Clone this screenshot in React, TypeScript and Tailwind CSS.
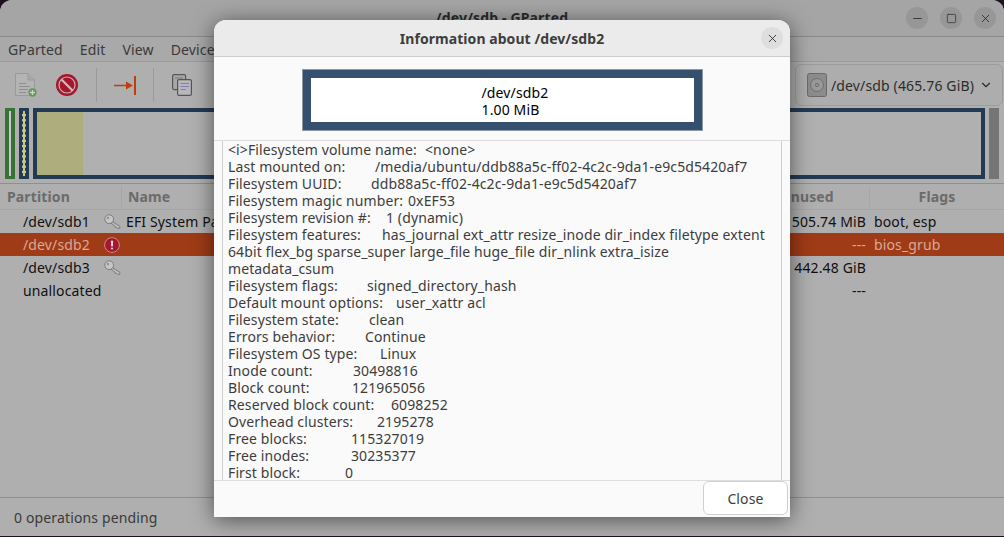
import { ChevronDown, Minus, Square, X } from 'lucide-react';

const partitions = [
  { name: '/dev/sdb1', icon: 'key', label: 'EFI System Partition', unused: '505.74 MiB', flags: 'boot, esp' },
  { name: '/dev/sdb2', icon: 'error', label: '', unused: '---', flags: 'bios_grub', selected: true },
  { name: '/dev/sdb3', icon: 'key', label: '', unused: '442.48 GiB', flags: '' },
  { name: 'unallocated', icon: '', label: '', unused: '---', flags: '' },
];

const info = [
  { label: '<i>Filesystem volume name:', value: '<none>', w: 'w-[197px]' },
  { label: 'Last mounted on:', value: '/media/ubuntu/ddb88a5c-ff02-4c2c-9da1-e9c5d5420af7', w: 'w-[147px]' },
  { label: 'Filesystem UUID:', value: 'ddb88a5c-ff02-4c2c-9da1-e9c5d5420af7', w: 'w-[143px]' },
  { label: 'Filesystem magic number:', value: '0xEF53', w: 'w-[180px]' },
  { label: 'Filesystem revision #:', value: '1 (dynamic)', w: 'w-[158px]' },
  { label: 'Filesystem features:', value: 'has_journal ext_attr resize_inode dir_index filetype extent', w: 'w-[154px]' },
  { label: '64bit flex_bg sparse_super large_file huge_file dir_nlink extra_isize', value: '', w: '' },
  { label: 'metadata_csum', value: '', w: '' },
  { label: 'Filesystem flags:', value: 'signed_directory_hash', w: 'w-[139px]' },
  { label: 'Default mount options:', value: 'user_xattr acl', w: 'w-[168px]' },
  { label: 'Filesystem state:', value: 'clean', w: 'w-[141px]' },
  { label: 'Errors behavior:', value: 'Continue', w: 'w-[137px]' },
  { label: 'Filesystem OS type:', value: 'Linux', w: 'w-[152px]' },
  { label: 'Inode count:', value: '30498816', w: 'w-[125px]' },
  { label: 'Block count:', value: '121965056', w: 'w-[124px]' },
  { label: 'Reserved block count:', value: '6098252', w: 'w-[163px]' },
  { label: 'Overhead clusters:', value: '2195278', w: 'w-[149px]' },
  { label: 'Free blocks:', value: '115327019', w: 'w-[123px]' },
  { label: 'Free inodes:', value: '30235377', w: 'w-[123px]' },
  { label: 'First block:', value: '0', w: 'w-[117px]' },
];

function KeyIcon() {
  return (
    <svg width="17" height="16" viewBox="0 0 17 16" fill="none" stroke="#7c7c7c" strokeWidth="1">
      <path d="M8 7.5 L15.8 12.2 V14.3 H13.4 L12.4 13.2 L11.2 13.4 L10.8 12 L6.8 9" fill="#bdbdbd" />
      <circle cx="5.2" cy="5.2" r="4.4" fill="#c6c6c6" />
      <circle cx="4" cy="4" r="1.2" fill="#909090" stroke="none" />
    </svg>
  );
}

function ErrorIcon() {
  return (
    <svg width="16" height="16" viewBox="0 0 16 16">
      <circle cx="8" cy="8" r="7.4" fill="#a3182e" stroke="#d8a0a0" strokeWidth="0.8" />
      <rect x="7" y="3.5" width="2" height="6" rx="0.8" fill="#e8d8d8" />
      <circle cx="8" cy="11.5" r="1.1" fill="#e8d8d8" />
    </svg>
  );
}

function NewIcon() {
  return (
    <svg width="22" height="24" viewBox="0 0 22 24" fill="none">
      <path d="M0.5 0.5 H13 L19.5 7 V22.5 H0.5 Z" fill="#b4b4b4" stroke="#9a9a9a" />
      <path d="M13 0.5 V7 H19.5" fill="#a8a8a8" stroke="#9a9a9a" />
      <path d="M4 10.5 H11 M4 13.5 H15 M4 16.5 H13 M4 19.5 H11" stroke="#8f8f8f" />
      <circle cx="17.5" cy="19.5" r="4.2" fill="#67955f" />
      <path d="M17.5 17 V22 M15 19.5 H20" stroke="#c8d8c4" strokeWidth="1.3" />
    </svg>
  );
}

function StopIcon() {
  return (
    <svg width="22" height="22" viewBox="0 0 22 22" fill="none">
      <circle cx="11" cy="11" r="11" fill="#a3182e" />
      <circle cx="11" cy="11" r="8" fill="#a3182e" stroke="#c4b4b4" strokeWidth="1.2" />
      <path d="M5.5 5.5 L16.5 16.5" stroke="#c8bcbc" strokeWidth="2.2" />
    </svg>
  );
}

function ApplyIcon() {
  return (
    <svg width="22" height="19" viewBox="0 0 22 19" fill="none">
      <path d="M0 9.5 H14" stroke="#bd3f10" strokeWidth="1.6" />
      <path d="M12 5.5 L19 9.5 L12 13.5 Z" fill="#bd3f10" />
      <rect x="20" y="0" width="2" height="19" fill="#bd3f10" />
    </svg>
  );
}

function CopyIcon() {
  return (
    <svg width="20" height="22" viewBox="0 0 20 22" fill="none">
      <rect x="0.6" y="0.6" width="13" height="15" rx="1.5" fill="#a8a8a8" stroke="#555" strokeWidth="1.2" />
      <path d="M3 4 H11" stroke="#777" />
      <rect x="5.6" y="5.6" width="13.8" height="15.8" rx="1.5" fill="#b8b8bc" stroke="#555" strokeWidth="1.2" />
      <path d="M8.5 9.5 H17 M8.5 12.5 H17 M8.5 15.5 H14" stroke="#7f7fb8" />
    </svg>
  );
}

function DiskIcon() {
  return (
    <svg width="20" height="24" viewBox="0 0 20 24" fill="none">
      <rect x="0.5" y="0.5" width="19" height="23" rx="2" fill="#8c8c8c" stroke="#6a6a6a" />
      <circle cx="10" cy="12" r="6.5" fill="#999" stroke="#6f6f6f" />
      <circle cx="10" cy="12" r="1.6" stroke="#6f6f6f" />
    </svg>
  );
}

function WindowButton({ children }: { children: React.ReactNode }) {
  return (
    <div className="flex h-[22px] w-[22px] items-center justify-center rounded-full bg-[#979797] text-[#2c2c2c]">
      {children}
    </div>
  );
}

function InfoDialog() {
  return (
    <div className="absolute top-[20px] left-[214px] flex h-[497px] w-[576px] flex-col rounded-t-[12px] bg-[#fafafa] shadow-[0_3px_22px_rgba(0,0,0,0.55)]">
      <div className="relative flex h-[37px] shrink-0 items-center justify-center rounded-t-[12px] border-b border-[#cdcdcd] bg-[#ebebeb]">
        <span className="text-[14px] font-bold tracking-[0.06px] text-[#3d3d3d]">Information about /dev/sdb2</span>
        <div className="absolute top-[7px] right-[7px] flex h-[22px] w-[22px] items-center justify-center rounded-full bg-[#dedede] text-[#2c2c2c]">
          <X size={13} strokeWidth={1.6} />
        </div>
      </div>
      <div className="flex flex-1 flex-col min-h-0">
        <div className="flex h-[84px] shrink-0 items-start justify-center border-b border-[#dcdcdc] pt-[12px]">
          <div className="flex h-[62px] w-[401px] flex-col items-start justify-center border border-[#8d9aa6] bg-white pt-[2px] pl-[179px] outline-[8px] -outline-offset-[9px] outline-[#34506e] text-[14px] leading-[17px] text-black">
            <span>/dev/sdb2</span>
            <span>1.00 MiB</span>
          </div>
        </div>
        <div className="mx-[8px] min-h-0 flex-1 overflow-hidden border-x border-[#cfcfcf] pl-[5px] text-[14px] leading-[17px] tracking-[0.11px] text-[#3d3d3d]">
          {info.map((line) => (
            <div key={line.label} className="flex h-[17px] whitespace-pre">
              <span className={line.w}>{line.label}</span>
              <span>{line.value}</span>
            </div>
          ))}
        </div>
      </div>
      <div className="flex h-[37px] shrink-0 items-start justify-end border-t border-[#dedede] pr-[2px]">
        <button className="h-[34px] w-[85px] rounded-[6px] border border-[#cfcfcf] bg-white text-[14px] text-[#3d3d3d]">
          Close
        </button>
      </div>
    </div>
  );
}

export default function App() {
  return (
    <div className="relative h-[537px] w-[1004px] overflow-hidden bg-[#1c1020] font-['Noto_Sans',sans-serif] text-[14px] tracking-[0.14px]">
      <div className="flex h-[536px] flex-col overflow-hidden rounded-t-[12px] bg-[#afafaf]">
        <div className="relative flex h-[37px] shrink-0 items-center justify-center border-b border-[#8a8a8a] bg-[#a5a5a5]">
          <span className="mb-[1px] text-[14px] font-bold text-[#2c2c2c]">/dev/sdb - GParted</span>
          <div className="absolute top-[7px] right-[8px] flex gap-[12px]">
            <WindowButton><Minus size={13} strokeWidth={1.6} /></WindowButton>
            <WindowButton><Square size={11} strokeWidth={1.6} /></WindowButton>
            <WindowButton><X size={13} strokeWidth={1.6} /></WindowButton>
          </div>
        </div>
        <div className="flex h-[25px] shrink-0 items-center gap-[17px] border-b border-[#9b9b9b] bg-[#a9a9a9] pl-[8px] text-[#3a3a3a]">
          <span>GParted</span>
          <span>Edit</span>
          <span>View</span>
          <span>Device</span>
          <span>Partition</span>
          <span>Help</span>
        </div>
        <div className="flex h-[46px] shrink-0 items-center pl-[15px]">
          <NewIcon />
          <div className="ml-[19px]"><StopIcon /></div>
          <div className="ml-[18px] mr-[17px] h-[34px] w-px bg-[#9a9a9a]" />
          <ApplyIcon />
          <div className="mx-[17px] h-[34px] w-px bg-[#9a9a9a]" />
          <div className="ml-[1px]"><CopyIcon /></div>
          <div className="ml-auto mr-[1px] flex h-[42px] w-[208px] items-center rounded-[6px] border border-[#9c9c9c] bg-[#adadad] pl-[11px] text-[#2c2c2c]">
            <DiskIcon />
            <span className="ml-[4px] whitespace-nowrap">/dev/sdb (465.76 GiB)</span>
            <ChevronDown size={14} className="ml-[5px]" />
          </div>
        </div>
        <div className="flex h-[71px] shrink-0 gap-[4px] pl-[5px] pr-[5px]">
          <div className="flex w-[10px] justify-center border-[3px] border-[#377237] bg-[#377237]">
            <div className="w-[2px] bg-[#c9c9c9]" />
          </div>
          <div className="w-[10px] border-[3px] border-[#223a52] bg-[#c9c98a]">
            <div className="h-full w-full border-x border-dashed border-[#223a52]" />
          </div>
          <div className="flex flex-1 border-[4px] border-[#223a52] bg-[#b0b0b0]">
            <div className="w-[46px] bg-[#adad7e]" />
          </div>
          <div className="w-[10px] bg-[#757575]" />
        </div>
        <div className="mt-[4px] flex min-h-0 flex-1 flex-col border-y border-[#8f8f8f]">
          <div className="flex h-[26px] shrink-0 items-center border-b border-[#a6a6a6] font-bold text-[#6b6b6b]">
            <span className="w-[122px] border-r border-[#a6a6a6] pl-[7px]">Partition</span>
            <span className="flex-1 pl-[6px]">Name</span>
            <span className="w-[90px] border-r border-[#a6a6a6] pr-[44px] text-right">Unused</span>
            <span className="w-[134px] text-center">Flags</span>
          </div>
          {partitions.map((p) => (
            <div
              key={p.name}
              className={p.selected ? 'flex h-[23px] items-center bg-[#a03b17] text-[#d9a999]' : 'flex h-[23px] items-center text-[#101010]'}
            >
              <span className="w-[103px] pl-[23px]">{p.name}</span>
              <div className="w-[23px] pl-[1px]">
                {p.icon === 'key' && <KeyIcon />}
                {p.icon === 'error' && <ErrorIcon />}
              </div>
              <span className="flex-1 whitespace-nowrap">{p.label}</span>
              <span className="w-[80px] whitespace-nowrap text-right">{p.unused}</span>
              <span className="w-[138px] pl-[8px]">{p.flags}</span>
            </div>
          ))}
        </div>
        <div className="flex h-[38px] shrink-0 items-center pl-[14px] text-[#3a3a3a]">0 operations pending</div>
      </div>
      <InfoDialog />
    </div>
  );
}
